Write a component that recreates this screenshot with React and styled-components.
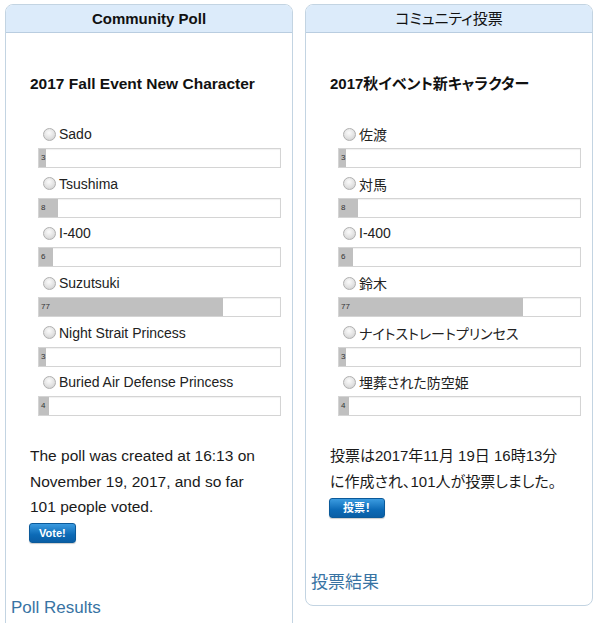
import React from 'react'
import styled, { createGlobalStyle } from 'styled-components'

const GlobalStyle = createGlobalStyle`
	html, body {
		margin: 0;
		padding: 0;
		overflow: hidden;
		background: #ffffff;
	}
	body {
		font-family: 'Liberation Sans', 'Noto Sans CJK JP', Arial, sans-serif;
		color: #111;
	}
`

const polls = [
	{
		id: 'en',
		heading: 'Community Poll',
		headingBold: true,
		title: '2017 Fall Event New Character',
		total: 101,
		options: [
			{ label: 'Sado', votes: 3 },
			{ label: 'Tsushima', votes: 8 },
			{ label: 'I-400', votes: 6 },
			{ label: 'Suzutsuki', votes: 77 },
			{ label: 'Night Strait Princess', votes: 3 },
			{ label: 'Buried Air Defense Princess', votes: 4 },
		],
		summary: ['The poll was created at 16:13 on', 'November 19, 2017, and so far', '101 people voted.'],
		vote: 'Vote!',
		results: 'Poll Results',
	},
	{
		id: 'ja',
		heading: 'コミュニティ投票',
		headingBold: false,
		title: '2017秋イベント新キャラクター',
		total: 101,
		options: [
			{ label: '佐渡', votes: 3 },
			{ label: '対馬', votes: 8 },
			{ label: 'I-400', votes: 6 },
			{ label: '鈴木', votes: 77 },
			{ label: 'ナイトストレートプリンセス', votes: 3 },
			{ label: '埋葬された防空姫', votes: 4 },
		],
		summary: ['投票は2017年11月 19日 16時13分', 'に作成され、101人が投票しました。'],
		vote: '投票！',
		results: '投票結果',
	},
]

const Page = styled.div`
	display: flex;
	align-items: flex-start;
	gap: 12px;
	padding: 4px 7px 0 5px;
`

const Panel = styled.section`
	width: 288px;
	box-sizing: border-box;
	border: 1px solid #c3d4e2;
	border-radius: 8px;
	background: #fff;
	overflow: hidden;
	padding-bottom: 12px;
	font-feature-settings: ${(p) => (p.$cjk ? '"palt"' : 'normal')};
`

const Header = styled.h2`
	margin: 0;
	height: 27px;
	line-height: 27px;
	background: #dcebfa;
	border-bottom: 1px solid #b9cde0;
	text-align: center;
	font-size: 15px;
	font-weight: ${(p) => (p.$bold ? 700 : 400)};
	color: #111;
`

const Title = styled.h3`
	margin: 41px 0 29px;
	padding-left: 24px;
	font-size: ${(p) => (p.$cjk ? '15px' : '15.5px')};
	line-height: 20px;
	font-weight: 700;
	color: #111;
`

const Options = styled.div`
	padding: 0 11px 0 32px;
`

const Option = styled.div`
	margin-bottom: 4.7px;
`

const Label = styled.label`
	display: flex;
	align-items: center;
	height: 22px;
	padding-left: 5px;
	font-size: 14px;
	color: #222;
`

const Radio = styled.span`
	width: 13px;
	height: 13px;
	box-sizing: border-box;
	border-radius: 50%;
	border: 1px solid #b0b0b0;
	background: radial-gradient(circle at 45% 35%, #fbfbfb 0%, #e2e2e2 55%, #c8c8c8 100%);
	margin-right: 3px;
	flex-shrink: 0;
`

const Bar = styled.div`
	position: relative;
	height: 20px;
	margin-top: 3px;
	box-sizing: border-box;
	border: 1px solid #d4d4d4;
	box-shadow: inset 0 1px 1px rgba(0, 0, 0, 0.06);
	background: #fff;
`

const Fill = styled.div`
	height: 100%;
	background: #c0c0c0;
`

const Count = styled.span`
	position: absolute;
	left: 2px;
	top: 0;
	line-height: 18px;
	font-size: 8px;
	color: #333;
`

const Summary = styled.p`
	margin: 27px 0 3.5px;
	padding-left: 24px;
	font-size: ${(p) => (p.$cjk ? '15px' : '15.5px')};
	line-height: 25.5px;
	color: #1a1a1a;
	white-space: nowrap;
`

const VoteButton = styled.button`
	display: block;
	margin-left: 23px;
	height: 20px;
	padding: 0 ${(p) => (p.$wide ? '13px' : '9px')};
	border: 1px solid #0b5a9a;
	border-radius: 3px;
	background: linear-gradient(#3b9be0, #0c6ab6 60%, #0a5ea5);
	box-shadow: 0 1px 1px rgba(0, 0, 0, 0.2);
	color: #fff;
	font-family: inherit;
	font-feature-settings: inherit;
	font-size: 11px;
	font-weight: 700;
	line-height: 18px;
`

const ResultsLink = styled.a`
	display: block;
	margin-top: 55px;
	padding-left: 5px;
	font-size: 17px;
	line-height: 20px;
	color: #3873a3;
	text-decoration: none;
`

function Poll({ poll }) {
	const cjk = poll.id === 'ja'
	return (
		<Panel $cjk={cjk}>
			<Header $bold={poll.headingBold}>{poll.heading}</Header>
			<Title $cjk={cjk}>{poll.title}</Title>
			<Options>
				{poll.options.map((opt) => (
					<Option key={opt.label}>
						<Label>
							<Radio />
							{opt.label}
						</Label>
						<Bar>
							<Fill style={{ width: `${(opt.votes / poll.total) * 100}%` }} />
							<Count>{opt.votes}</Count>
						</Bar>
					</Option>
				))}
			</Options>
			<Summary $cjk={cjk}>
				{poll.summary.map((line, i) => (
					<React.Fragment key={i}>
						{line}
						{i < poll.summary.length - 1 && <br />}
					</React.Fragment>
				))}
			</Summary>
			<VoteButton $wide={cjk}>{poll.vote}</VoteButton>
			<ResultsLink href="#">{poll.results}</ResultsLink>
		</Panel>
	)
}

export default function App() {
	return (
		<>
			<GlobalStyle />
			<Page>
				{polls.map((p) => (
					<Poll key={p.id} poll={p} />
				))}
			</Page>
		</>
	)
}
